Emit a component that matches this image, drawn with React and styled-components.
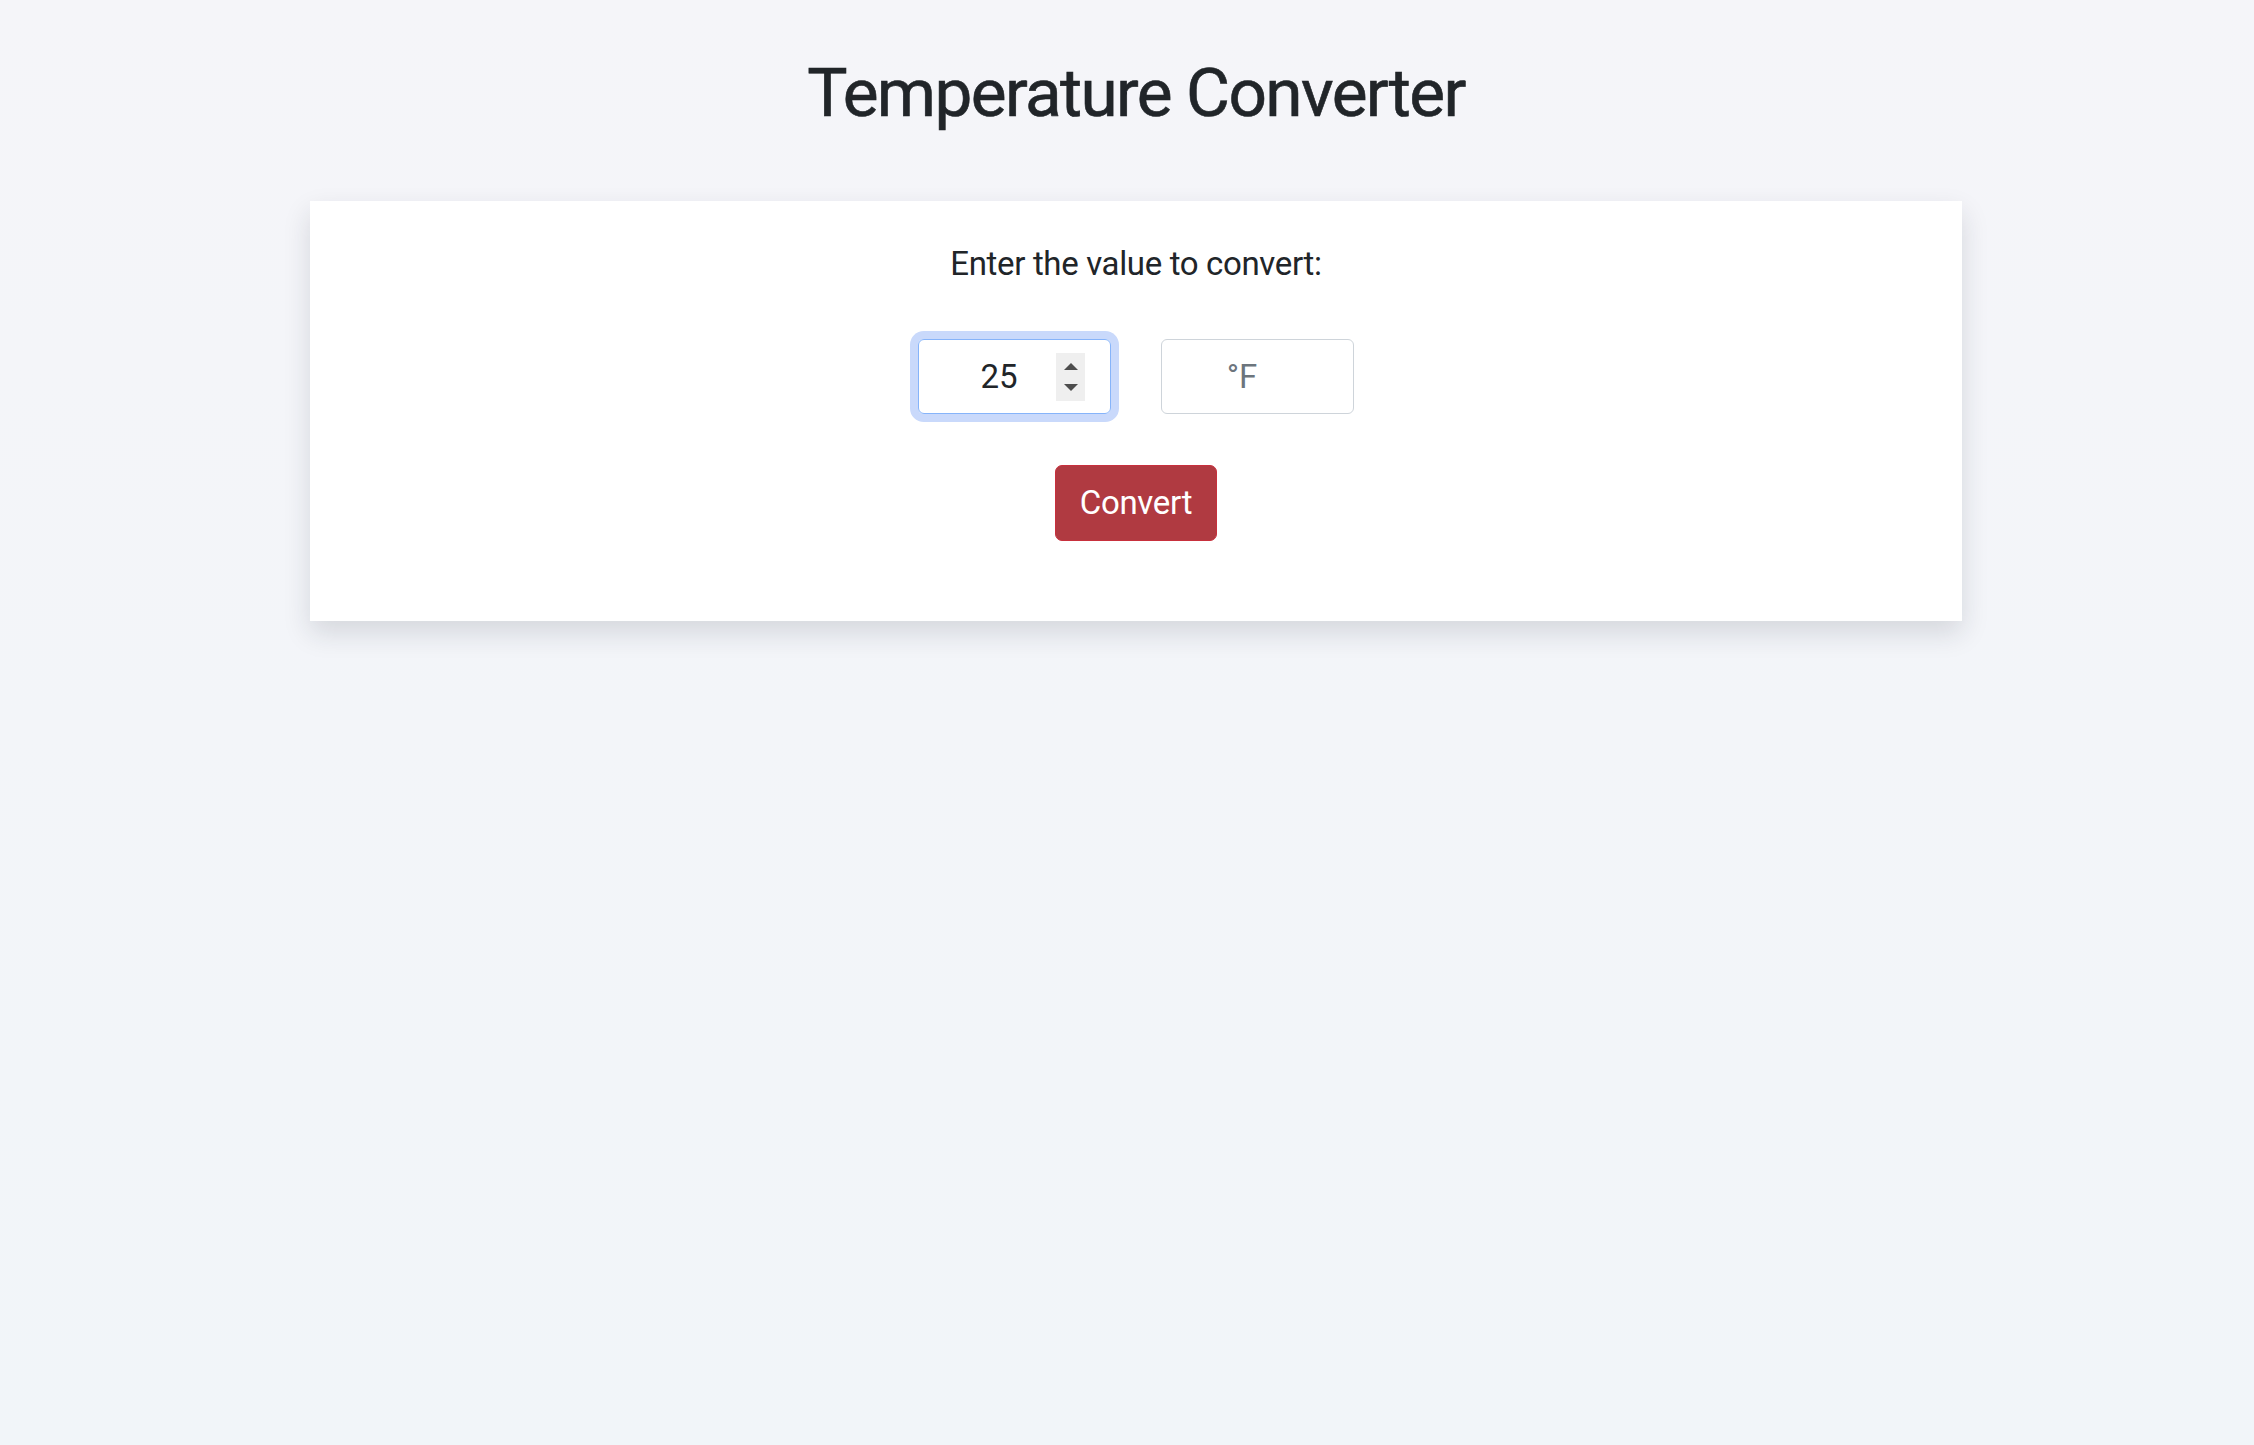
import React, { useState } from "react";
import styled, { createGlobalStyle } from "styled-components";

const GlobalStyle = createGlobalStyle`
  html, body {
    margin: 0;
    padding: 0;
  }
  body {
    min-height: 1445px;
    background: linear-gradient(180deg, #f5f5f9 0%, #f1f5f9 100%);
    font-family: Roboto, "Liberation Sans", Arial, sans-serif;
    color: #212529;
  }
  * { box-sizing: border-box; }
`;

const Page = styled.main`
  display: flex;
  flex-direction: column;
  align-items: center;
  padding: 52px 0 0 18px;
`;

const Title = styled.h1`
  margin: 0 0 68px;
  font-size: 67.5px;
  line-height: 81px;
  font-weight: 400;
  color: #212529;
  letter-spacing: -1.6px;
  -webkit-text-stroke: 0.6px #212529;
`;

const Card = styled.section`
  width: 1652px;
  height: 420px;
  background: #ffffff;
  box-shadow: 0 12px 26px rgba(30, 34, 48, 0.14);
  display: flex;
  flex-direction: column;
  align-items: center;
  padding-top: 38px;
`;

const Prompt = styled.p`
  margin: 0 0 50px;
  font-size: 33px;
  line-height: 49.5px;
  letter-spacing: -0.35px;
  color: #212529;
`;

const InputRow = styled.div`
  display: flex;
  gap: 50px;
  margin-bottom: 51px;
`;

const Field = styled.div`
  position: relative;
  width: 193px;
  height: 75px;
  border-radius: 6px;
  box-shadow: ${(p) => (p.$focused ? "0 0 0 8px #c9d9fb" : "none")};
`;

const Input = styled.input`
  width: 100%;
  height: 100%;
  border: 1.5px solid ${(p) => (p.$focused ? "#86b4fa" : "#ced4da")};
  border-radius: 6px;
  background: #fff;
  padding: 0 55px 0 24px;
  text-align: center;
  font-family: Roboto, "Liberation Sans", Arial, sans-serif;
  font-size: 33px;
  color: #212529;
  outline: none;
  &::placeholder {
    color: #6c757d;
    opacity: 1;
  }
`;

const Spinner = styled.div`
  position: absolute;
  left: 138px;
  top: 14px;
  width: 29px;
  height: 48px;
  background: #efefef;
  display: flex;
  flex-direction: column;
  align-items: center;
  justify-content: center;
  gap: 14px;
`;

const Arrow = styled.span`
  width: 0;
  height: 0;
  border-left: 7px solid transparent;
  border-right: 7px solid transparent;
  ${(p) =>
    p.$down
      ? "border-top: 7px solid #4d4d4d;"
      : "border-bottom: 7px solid #4d4d4d;"}
`;

const Button = styled.button`
  width: 162px;
  height: 76px;
  border: 1.5px solid #c8303d;
  border-radius: 7px;
  background: #b03a41;
  color: #ffffff;
  font-family: Roboto, "Liberation Sans", Arial, sans-serif;
  font-size: 33px;
  letter-spacing: -0.3px;
  padding: 0;
  cursor: pointer;
`;

export default function App() {
  const [value, setValue] = useState("25");
  return (
    <>
      <GlobalStyle />
      <Page>
        <Title>Temperature Converter</Title>
        <Card>
          <Prompt>Enter the value to convert:</Prompt>
          <InputRow>
            <Field $focused>
              <Input
                $focused
                type="text"
                value={value}
                onChange={(e) => setValue(e.target.value)}
              />
              <Spinner>
                <Arrow />
                <Arrow $down />
              </Spinner>
            </Field>
            <Field>
              <Input type="text" placeholder="°F" readOnly />
            </Field>
          </InputRow>
          <Button>Convert</Button>
        </Card>
      </Page>
    </>
  );
}
